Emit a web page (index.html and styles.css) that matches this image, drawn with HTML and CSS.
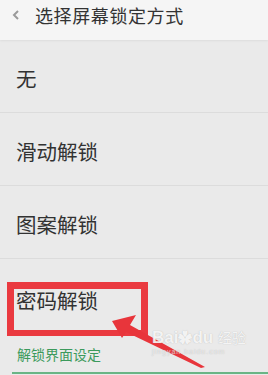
FILE: index.html
```html
<!DOCTYPE html>
<html lang="zh-CN">
<head>
<meta charset="utf-8">
<link rel="stylesheet" href="styles.css">
</head>
<body>
<div class="screen">
  <div class="status"></div>
  <header class="bar">
    <svg class="back" width="10" height="12" viewBox="0 0 10 12"><path d="M7 2 L3 6 L7 10" fill="none" stroke="#9a9a9a" stroke-width="2"/></svg>
    <span class="title">选择屏幕锁定方式</span>
  </header>
  <ul class="list">
    <li class="item">无</li>
    <li class="item">滑动解锁</li>
    <li class="item">图案解锁</li>
    <li class="item last">密码解锁</li>
  </ul>
  <div class="section">解锁界面设定</div>

  <div class="highlight"></div>
  <svg class="arrow" width="268" height="375" viewBox="0 0 268 375">
    <polygon points="112,321 136,315 130,325 205,367 201,368 126,332 122,338" fill="#e8353b"/>
  </svg>
  <div class="watermark">Bai<span class="paw">✿</span>du <span class="jy">经验</span><div class="url">jingyan.baidu.com</div></div>
</div>
</body>
</html>
```
FILE: styles.css
```css
html, body {
  margin: 0;
  padding: 0;
}
body {
  width: 268px;
  height: 375px;
  overflow: hidden;
  background: #eaeaea;
  font-family: "Noto Sans CJK SC", "Noto Sans", sans-serif;
}
.screen {
  position: relative;
  width: 268px;
  height: 375px;
  background: #eaeaea;
}
.status {
  height: 2px;
  background: #3a3a3a;
}
.bar {
  height: 38px;
  background: #f5f5f5;
  display: flex;
  align-items: center;
  box-shadow: 0 1px 2px rgba(0,0,0,0.06);
  margin-top: -6px;
  padding-bottom: 6px;
  box-sizing: content-box;
}
.back {
  margin-left: 11px;
  margin-right: 14px;
}
.title {
  font-size: 18px;
  color: #333;
  letter-spacing: 0.6px;
}
.list {
  list-style: none;
  margin: 0;
  padding: 0;
}
.item {
  height: 73px;
  border-bottom: 1px solid #dcdcdc;
  display: flex;
  align-items: center;
  padding-left: 16px;
  padding-top: 3px;
  box-sizing: border-box;
  font-size: 20.5px;
  color: #323232;
}
.item.last {
  border-bottom: none;
  height: 74px;
  padding-bottom: 0;
  align-items: flex-start;
  padding-top: 26px;
}
.section {
  margin: 11px 0 0 12px;
  padding: 0 0 8px 5px;
  font-size: 14px;
  color: #3c9a5c;
  border-bottom: 2px solid #6ab585;
  line-height: 20px;
}
.highlight {
  position: absolute;
  left: 7px;
  top: 282px;
  width: 127px;
  height: 41px;
  border: 7px solid #ea3a40;
  border-bottom-width: 6px;
}
.arrow {
  position: absolute;
  left: 0;
  top: 0;
}
.watermark {
  position: absolute;
  left: 152px;
  top: 327px;
  color: rgba(255,255,255,0.85);
  font-family: "Liberation Sans", sans-serif;
  font-weight: bold;
  font-size: 17px;
  line-height: 20px;
  text-shadow: 0 0 1px rgba(140,140,140,0.6);
}
.paw {
  font-size: 14px;
}
.jy {
  font-family: "Noto Sans CJK SC", sans-serif;
  font-size: 14px;
  font-weight: normal;
}
.url {
  font-size: 7px;
  line-height: 8px;
  font-weight: normal;
  letter-spacing: 1px;
  color: rgba(255,255,255,0.6);
}
```
